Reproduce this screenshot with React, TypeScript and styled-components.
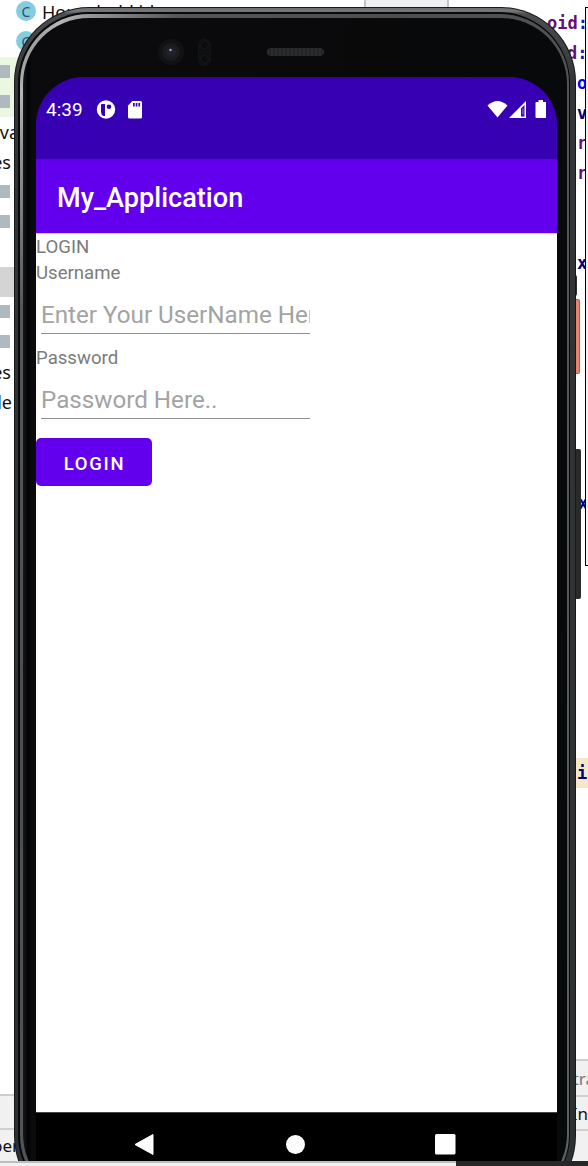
import React from "react";
import styled, { createGlobalStyle } from "styled-components";

const GlobalStyle = createGlobalStyle`
  *, *::before, *::after { box-sizing: border-box; }
  body { margin: 0; background: #fff; overflow: hidden; }
`;

const Desktop = styled.div`
  position: relative;
  display: flex;
  flex-direction: column;
  width: 588px;
  height: 1166px;
  overflow: hidden;
  background: #fff;
  font-family: "Noto Sans", sans-serif;
`;

const Workspace = styled.div`
  display: flex;
  height: 1161px;
  overflow: hidden;
`;

/* Project tree on the left */
const Tree = styled.div`
  display: flex;
  flex-direction: column;
  width: 150px;
  height: 1161px;
`;

const TreeRows = styled.div`
  height: 1095px;
  margin-top: -3px;
  flex: 1;
`;

const TreeRow = styled.div<{ $bg?: string; $width?: number }>`
  display: flex;
  align-items: center;
  width: ${(p) => (p.$width ? `${p.$width}px` : "100%")};
  height: 30px;
  background: ${(p) => p.$bg ?? "transparent"};
  color: #111;
  font-size: 18px;
  white-space: nowrap;
  justify-content: ${(p) => (p.$width ? "flex-end" : "flex-start")};
`;

const ClassBadge = styled.span`
  display: flex;
  flex: none;
  align-items: center;
  justify-content: center;
  width: 20px;
  height: 20px;
  margin: -2px 6px 0 16px;
  border-radius: 50%;
  background: #83cce2;
  color: #36515d;
  font-size: 14px;
`;

const FileMark = styled.span`
  width: 10px;
  height: 13px;
  margin-top: -1px;
  background: #aeb9c0;
`;

const DockBar = styled.div<{ $height: number; $end?: number; $color?: string }>`
  display: flex;
  align-items: center;
  justify-content: flex-end;
  width: 100%;
  height: ${(p) => p.$height}px;
  padding-right: ${(p) => p.$end ?? 0}px;
  border-top: 2px solid #cfcfcf;
  background: #f1f1f1;
  color: ${(p) => p.$color ?? "#111"};
  font-size: 17px;
  white-space: nowrap;
`;

/* Tab strip fragment above the editor */
const EditorTab = styled.div`
  width: 85px;
  height: 9px;
  margin-left: 214px;
  border: solid #c4c4c6;
  border-width: 0 2px;
  background: #f0f0f2;
`;

/* Code editor on the right */
const Editor = styled.div`
  position: relative;
  display: flex;
  flex-direction: column;
  width: 88px;
  margin-left: auto;
`;

const CodeLines = styled.div`
  flex: 1;
  padding-top: 8px;
  font-family: "DejaVu Sans Mono", monospace;
  font-weight: 700;
  font-size: 17px;
`;

const CodeLine = styled.div<{ $color?: string; $bg?: string; $indent: number }>`
  height: 30px;
  padding-left: ${(p) => p.$indent}px;
  line-height: 30px;
  color: ${(p) => p.$color ?? "#660e7a"};
  background: ${(p) => p.$bg ?? "transparent"};
  white-space: nowrap;
`;

const Colon = styled.span`
  color: #1414c8;
`;

const PopupEdge = styled.div`
  position: absolute;
  top: 7px;
  right: 0;
  width: 3px;
  height: 559px;
  border: 1px solid #000;
  border-right: 0;
  background: #f3f3f3;
`;

const BottomStrip = styled.div`
  display: flex;
  height: 5px;
  background: #272727;
`;

const StripLight = styled.div`
  width: 456px;
  border-top: 2px solid #bdbdbd;
  background: #f0f0f0;
`;

/* Phone, floating over the IDE */
const Phone = styled.div`
  position: absolute;
  top: 0;
  left: 0;
  width: 588px;
  height: 1161px;
  overflow: hidden;
`;

const SideButton = styled.div<{ $top: number; $height: number; $color: string; $width: number }>`
  position: absolute;
  left: 573px;
  top: ${(p) => p.$top}px;
  width: ${(p) => p.$width}px;
  height: ${(p) => p.$height}px;
  border: 1px solid rgba(50, 40, 40, 0.35);
  border-radius: 2px;
  background: ${(p) => p.$color};
`;

const Shell = styled.div`
  position: relative;
  width: 562px;
  height: 1204px;
  margin: 7px 0 0 14px;
  padding: 1px;
  border-radius: 75px;
  background: #171819;
`;

const OuterRim = styled.div`
  height: 100%;
  padding: 4px 5px 4px 3px;
  border-radius: 74px;
  background: linear-gradient(180deg, #6a6c6e 0, #77797b 3px, #4b4d4e 6px, #333536 75px, #2d3031 100%);
`;

const Groove = styled.div`
  height: 100%;
  padding: 2px 1px 2px 2px;
  border-radius: 71px;
  background: #08090a;
`;

const InnerRim = styled.div`
  height: 100%;
  padding: 4px 2px 4px 3px;
  border-radius: 69px;
  background: linear-gradient(118deg, #707173 0, #b5b6b7 38px, #939495 65px, #555657 140px, #4d4e50 330px, #5e6062 100%);
`;

const Glass = styled.div`
  position: relative;
  display: flex;
  flex-direction: column;
  height: 100%;
  padding: 0 8px 0 13px;
  border-radius: 66px;
  background: linear-gradient(90deg, #17181a 0, #030304 5px, #0b0a0c 9px, #08090a 100%);
`;

const SensorArea = styled.div`
  display: flex;
  height: 59px;
  padding: 20px 0 0 122px;
`;

const Speaker = styled.div`
  width: 57px;
  height: 8px;
  margin: 10px 0 0 53px;
  border-radius: 4px;
  background: repeating-linear-gradient(90deg, #2b2c2e 0 2px, #222325 2px 4px);
`;

const Screen = styled.div`
  display: flex;
  flex-direction: column;
  width: 521px;
  height: 1084px;
  overflow: hidden;
  border-radius: 48px 48px 0 0;
  background: #3700b3;
  font-family: Roboto, sans-serif;
`;

const StatusBar = styled.div`
  display: flex;
  align-items: flex-start;
  justify-content: space-between;
  height: 82px;
  padding: 22px 11px 0 10px;
  background: #3700b3;
  color: #fff;
`;

const StatusGroup = styled.div`
  display: flex;
  align-items: center;
  height: 22px;
`;

const Clock = styled.span`
  width: 50px;
  font-size: 19px;
  line-height: 22px;
`;

const AppBar = styled.header`
  display: flex;
  align-items: center;
  height: 75px;
  padding: 3px 21px 0;
  border-bottom: 1px solid #d9c5fa;
  background: #6200ee;
  color: #fff;
  font-size: 27.1px;
  font-weight: 500;
`;

const Form = styled.main`
  display: flex;
  flex: 1;
  flex-direction: column;
  align-items: flex-start;
  background: #fff;
`;

const Label = styled.label<{ $height: number }>`
  height: ${(p) => p.$height}px;
  font-size: 18.6px;
  line-height: 26px;
  color: #7b7b7b;
`;

const Field = styled.div<{ $gap: number }>`
  width: 269px;
  height: 44px;
  margin: 5px 0 ${(p) => p.$gap}px 5px;
  overflow: hidden;
  border-bottom: 1px solid #909090;
  color: #a3a3a3;
  font-size: 24.2px;
  line-height: 51px;
  white-space: nowrap;
`;

const LoginButton = styled.button`
  width: 116px;
  height: 48px;
  padding: 3px 0 0 1px;
  border: 0;
  border-radius: 5px;
  background: #6200ee;
  color: #fff;
  font: 500 18.5px Roboto, sans-serif;
  letter-spacing: 1.7px;
`;

const NavBar = styled.nav`
  display: flex;
  height: 49px;
  padding: 21px 101px 0 98px;
  justify-content: space-between;
  border-top: 1px solid #444;
  background: #000;
`;

const purple = "#660e7a";
const navy = "#000080";
const codeLines: { text: string; color?: string; indent: number; colon?: boolean; bg?: string }[] = [
  { text: "oid", indent: 47, colon: true },
  { text: "d", indent: 67, colon: true },
  { text: "o", indent: 77, color: "#0000ff" },
  { text: "v", indent: 77, color: navy },
  { text: "r", indent: 77, color: purple },
  { text: "r", indent: 77, color: purple },
  { text: "", indent: 0 },
  { text: "", indent: 0 },
  { text: "x", indent: 77, color: navy },
  ...Array.from({ length: 7 }, () => ({ text: "", indent: 0 })),
  { text: "x", indent: 78, color: navy },
  ...Array.from({ length: 8 }, () => ({ text: "", indent: 0 })),
  { text: "i", indent: 77, color: navy, bg: "#f5e8c5" },
];

const treeRows: { text?: string; width?: number; bg?: string; mark?: boolean }[] = [
  { mark: true, bg: "#ecf7e2" },
  { mark: true, bg: "#ecf7e2" },
  { text: "ava", width: 19 },
  { text: "es", width: 11 },
  { mark: true },
  { mark: true },
  {},
  { bg: "#d4d4d4" },
  { mark: true },
  { mark: true },
  { text: "es", width: 11 },
  { text: "le", width: 12 },
];

export default function App() {
  return (
    <Desktop>
      <GlobalStyle />
      <Workspace>
        <Tree>
          <TreeRows>
            <TreeRow><ClassBadge>C</ClassBadge>Household id</TreeRow>
            <TreeRow><ClassBadge>C</ClassBadge></TreeRow>
            {treeRows.map((row, i) => (
              <TreeRow key={i} $bg={row.bg} $width={row.width}>
                {row.mark && <FileMark />}
                {row.text}
              </TreeRow>
            ))}
          </TreeRows>
          <DockBar $height={34} />
          <DockBar $height={33} $end={131}>per</DockBar>
        </Tree>
        <EditorTab />
        <Editor>
          <CodeLines>
            {codeLines.map((line, i) => (
              <CodeLine key={i} $indent={line.indent} $color={line.color} $bg={line.bg}>
                {line.text}
                {line.colon && <Colon>:</Colon>}
              </CodeLine>
            ))}
          </CodeLines>
          <DockBar $height={36} $end={0} $color="#777"><span style={{ marginRight: -7 }}>tra</span></DockBar>
          <DockBar $height={34}>In</DockBar>
          <DockBar $height={32} />
          <PopupEdge />
        </Editor>
      </Workspace>
      <BottomStrip><StripLight /></BottomStrip>

      <Phone>
        <SideButton $top={275} $height={21} $width={4} $color="#333" />
        <SideButton $top={299} $height={75} $width={7} $color="#e9816c" />
        <SideButton $top={449} $height={150} $width={8} $color="#292b2b" />
        <Shell>
          <OuterRim>
            <Groove>
              <InnerRim>
                <Glass>
                  <SensorArea>
                    <svg width="56" height="32" viewBox="0 0 56 32">
                      <circle cx="13" cy="14" r="13" fill="#111213" />
                      <circle cx="13" cy="14" r="9" fill="#1a1b1d" />
                      <circle cx="13" cy="14" r="5" fill="#20212c" />
                      <circle cx="12.5" cy="12" r="1.2" fill="#a5a5b6" />
                      <rect x="40.5" y="1" width="12" height="27" rx="6" fill="#0e0f10" stroke="#131415" />
                      <circle cx="46.5" cy="7" r="4" fill="#0b0c0c" stroke="#161717" />
                      <circle cx="46.5" cy="21" r="4" fill="#0b0c0c" stroke="#161717" />
                    </svg>
                    <Speaker />
                  </SensorArea>
                  <Screen>
                    <StatusBar>
                      <StatusGroup>
                        <Clock>4:39</Clock>
                        <svg width="50" height="20" viewBox="0 0 50 20">
                          <circle cx="10" cy="9.5" r="9.2" fill="#fff" />
                          <path d="M5 5q0-1 1-1h3v12H7.500Q5 15 5 12z" fill="#3700b3" />
                          <circle cx="13" cy="6.800" r="2.300" fill="#3700b3" />
                          <path d="M36.500 1h8q1.500 0 1.500 1.500v14.500q0 1.500-1.500 1.500h-11q-1.500 0-1.500-1.500v-11.500z" fill="#fff" />
                          <path d="M37 3h1.700v3.500H37zM39.700 3h1.700v3.500h-1.700zM42.400 3h1.700v3.500h-1.700z" fill="#3700b3" />
                        </svg>
                      </StatusGroup>
                      <StatusGroup>
                        <svg width="60" height="20" viewBox="0 0 60 20">
                          <path d="M1.500 5.500Q11.500-3.500 21.500 5.500L11.500 17.500z" fill="#fff" />
                          <path d="M40 1v17H23z" fill="#fff" />
                          <path d="M35 8.500 38.500 5v11.500h-3.500z" fill="#3700b3" />
                          <path d="M36.300 8.500h1.200v6h-1.200z" fill="#8b6bd6" />
                          <path d="M52.500 0h4.500v2h2.500q1 0 1 1v14q0 1-1 1H50.500q-1 0-1-1V3q0-1 1-1h2z" fill="#fff" />
                        </svg>
                      </StatusGroup>
                    </StatusBar>
                    <AppBar>My_Application</AppBar>
                    <Form>
                      <Label $height={26}>LOGIN</Label>
                      <Label $height={25}>Username</Label>
                      <Field $gap={11}>Enter Your UserName Here..</Field>
                      <Label $height={25}>Password</Label>
                      <Field $gap={19}>Password Here..</Field>
                      <LoginButton>LOGIN</LoginButton>
                    </Form>
                    <NavBar>
                      <svg width="20" height="22" viewBox="0 0 20 22">
                        <path d="M19 0.500v20L1 10.500z" fill="#fff" stroke="#fff" strokeLinejoin="round" />
                      </svg>
                      <svg width="20" height="22" viewBox="0 0 20 22">
                        <circle cx="10.500" cy="10.500" r="9.500" fill="#fff" />
                      </svg>
                      <svg width="21" height="22" viewBox="0 0 21 22">
                        <rect width="20.500" height="20.500" rx="1.500" fill="#fff" />
                      </svg>
                    </NavBar>
                  </Screen>
                </Glass>
              </InnerRim>
            </Groove>
          </OuterRim>
        </Shell>
      </Phone>
    </Desktop>
  );
}
